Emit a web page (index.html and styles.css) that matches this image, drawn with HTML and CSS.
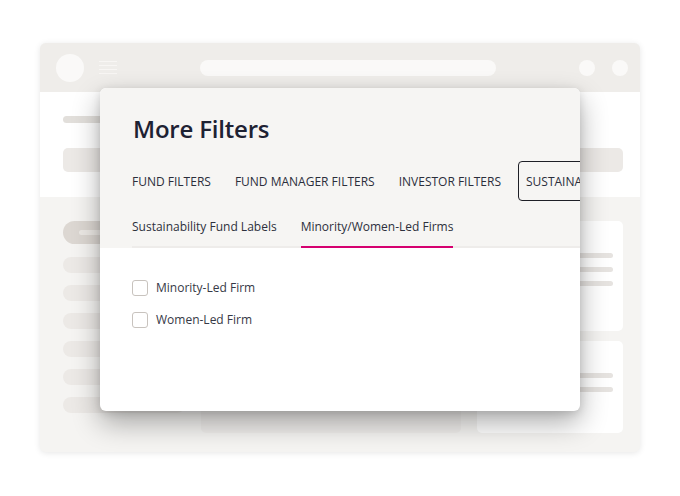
FILE: index.html
```html
<!DOCTYPE html>
<html>
<head>
<meta charset="utf-8">
<link rel="stylesheet" href="styles.css">
</head>
<body>
<div class="stage">
  <div class="window">
    <div class="topbar">
      <div class="avatar"></div>
      <div class="burger"><span></span><span></span><span></span><span></span></div>
      <div class="address"></div>
      <div class="dots"><span></span><span></span></div>
    </div>
    <div class="header">
      <div class="hbar1"></div>
      <div class="hbar2"></div>
    </div>
    <div class="content">
      <div class="sidebar">
        <div class="pill active"><span></span></div>
        <div class="pill"></div>
        <div class="pill"></div>
        <div class="pill"></div>
        <div class="pill"></div>
        <div class="pill"></div>
        <div class="pill"></div>
      </div>
      <div class="main-card"></div>
      <div class="rightcol">
        <div class="rcard r1"><i></i><i></i><i></i></div>
        <div class="rcard r2"><i></i><i></i></div>
      </div>
    </div>

    <div class="modal">
      <div class="modal-top">
        <h1 class="title">More Filters</h1>
        <div class="tabs">
          <div class="tab">FUND FILTERS</div>
          <div class="tab">FUND MANAGER FILTERS</div>
          <div class="tab">INVESTOR FILTERS</div>
          <div class="tab selected">SUSTAINABILITY</div>
        </div>
        <div class="subtabs">
          <div class="subtab">Sustainability Fund Labels</div>
          <div class="subtab active">Minority/Women-Led Firms</div>
        </div>
      </div>
      <div class="modal-body">
        <label class="check"><span class="box"></span><span class="lbl">Minority-Led Firm</span></label>
        <label class="check"><span class="box"></span><span class="lbl">Women-Led Firm</span></label>
      </div>
    </div>
  </div>
</div>
</body>
</html>
```
FILE: styles.css
```css
* { box-sizing: border-box; }
html, body { margin: 0; padding: 0; background: #ffffff; }
body { width: 680px; height: 496px; overflow: hidden; font-family: "Open Sans", "Noto Sans", sans-serif; }
.stage { padding: 43px 40px 0 40px; }
.window {
  position: relative;
  width: 600px;
  height: 409px;
  border-radius: 6px;
  background: #f5f4f2;
  box-shadow: 0 1px 6px rgba(0,0,0,0.10);
  overflow: hidden;
}
.topbar {
  height: 49px;
  background: #efedea;
  display: flex;
  align-items: center;
  padding: 0 12px 0 16px;
}
.avatar { width: 28px; height: 28px; border-radius: 50%; background: #faf9f8; }
.burger { margin-left: 15px; width: 18px; display: flex; flex-direction: column; gap: 3px; }
.burger span { display: block; height: 1px; background: #f8f6f4; }
.address { margin-left: 83px; width: 296px; height: 16px; border-radius: 8px; background: #faf9f8; }
.dots { margin-left: auto; display: flex; gap: 17px; }
.dots span { width: 16px; height: 16px; border-radius: 50%; background: #faf9f8; }
.header {
  height: 105px;
  background: #ffffff;
  padding: 24px 17px 0 23px;
}
.hbar1 { width: 90px; height: 7px; border-radius: 4px; background: #e2dfdb; }
.hbar2 { margin-top: 25px; height: 24px; border-radius: 5px; background: #ece9e6; }
.content {
  display: flex;
  padding: 24px 17px 0 23px;
  gap: 16px;
}
.sidebar { width: 122px; display: flex; flex-direction: column; gap: 12px; }
.pill { height: 16px; border-radius: 8px; background: #ece9e6; }
.pill.active { height: 23px; border-radius: 12px; background: #dcd7d2; display: flex; align-items: center; padding-left: 16px; margin-bottom: 1px; }
.pill.active span { width: 60px; height: 5px; border-radius: 3px; background: #ece9e5; }
.main-card { width: 260px; height: 212px; border-radius: 5px; background: #f0eeec; }
.rightcol { width: 146px; display: flex; flex-direction: column; gap: 10px; }
.rcard { background: #ffffff; border-radius: 5px; display: flex; flex-direction: column; align-items: flex-end; gap: 9px; padding: 32px 10px 0 10px; }
.rcard i { display: block; width: 120px; height: 5px; border-radius: 3px; background: #e6e3e0; }
.r1 { height: 110px; }
.r2 { height: 92px; }

.modal {
  position: absolute;
  left: 60px;
  top: 45px;
  width: 480px;
  height: 323px;
  border-radius: 6px;
  background: #ffffff;
  overflow: hidden;
  box-shadow: 0 12px 28px rgba(0,0,0,0.32), 0 2px 8px rgba(0,0,0,0.12);
}
.modal-top {
  background: #f6f5f3;
  padding: 26px 0 0 32px;
}
.title {
  margin: 0 0 0 1px;
  font-size: 24px;
  font-weight: 600;
  line-height: 30px;
  color: #1e2233;
  letter-spacing: -0.2px;
}
.tabs {
  display: flex;
  align-items: center;
  margin-top: 17px;
  white-space: nowrap;
  height: 40px;
}
.tab {
  font-size: 12px;
  color: #2b2e3b;
  margin-right: 24px;
  line-height: 16px;
  padding-top: 2px;
}
.tab.selected {
  margin-left: -7px;
  height: 40px;
  border: 1px solid #1e1f26;
  border-radius: 4px;
  padding: 12px 7px 0 7px;
  margin-right: 0;
}
.subtabs {
  display: flex;
  margin-top: 12px;
  border-bottom: 2px solid #eeecea;
  height: 35px;
}
.subtab {
  font-size: 12px;
  color: #2d303c;
  line-height: 16px;
  padding-top: 6px;
  margin-right: 25px;
  height: 35px;
}
.subtab.active { border-bottom: 2px solid #d5006f; margin-bottom: -2px; margin-left: -1px; }
.modal-body {
  padding: 32px 0 0 32px;
  display: flex;
  flex-direction: column;
  gap: 16px;
}
.check { display: flex; align-items: center; height: 16px; }
.box { width: 16px; height: 16px; border: 1.6px solid #c8c3be; border-radius: 3px; background: #fff; }
.lbl { margin-left: 8px; font-size: 12px; color: #363946; line-height: 16px; }
```
